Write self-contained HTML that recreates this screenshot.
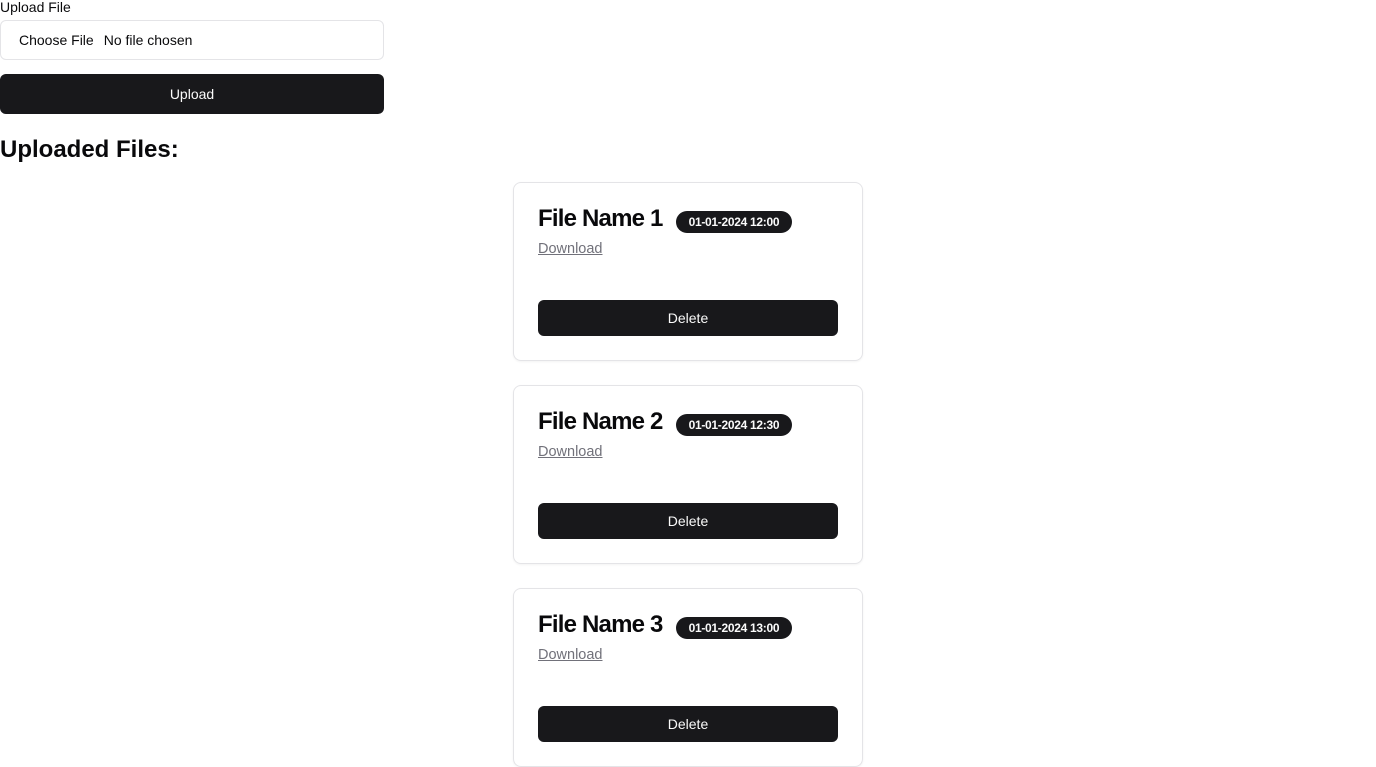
<!DOCTYPE html>
<html><head><style>
*{box-sizing:border-box;margin:0;padding:0}
body{width:1376px;height:767px;overflow:hidden;background:#fff;font-family:"Liberation Sans",Arial,sans-serif;color:#09090b;position:relative}
.lbl{position:absolute;left:0;top:-1px;font-size:14px;line-height:16px}
.inp{position:absolute;left:0;top:20px;width:384px;height:40px;border:1px solid #e4e4e7;border-radius:6px;font-size:14px;line-height:38px;padding-left:18px}
.inp b{font-weight:normal;color:#09090b;margin-right:10px}
.up{position:absolute;left:0;top:74px;width:384px;height:40px;background:#18181b;border-radius:6px;color:#fafafa;font-size:14px;text-align:center;line-height:40px}
h2{position:absolute;left:0;top:135px;font-size:24px;font-weight:bold;line-height:30px}
.card{position:absolute;left:513px;width:350px;height:179px;border:1px solid #e4e4e7;border-radius:8px;box-shadow:0 1px 2px rgba(0,0,0,.05)}
.t{position:absolute;left:24px;top:21px;font-size:24px;font-weight:bold;line-height:30px;letter-spacing:-0.8px}
.badge{display:inline-block;vertical-align:0;margin-left:13px;background:#18181b;color:#fafafa;font-size:12px;font-weight:bold;border-radius:11px;height:22px;line-height:22px;padding:0 13px;letter-spacing:-0.3px}
.dl{position:absolute;left:24px;top:58px;font-size:14.5px;color:#71717a;text-decoration:underline}
.del{position:absolute;left:24px;top:117px;width:300px;height:36px;background:#18181b;border-radius:6px;color:#fafafa;font-size:14px;text-align:center;line-height:36px}
</style></head><body>
<div class="lbl">Upload File</div>
<div class="inp"><b>Choose File</b>No file chosen</div>
<div class="up">Upload</div>
<h2>Uploaded Files:</h2>
<div class="card" style="top:182px"><div class="t">File Name 1<span class="badge">01-01-2024 12:00</span></div><div class="dl">Download</div><div class="del">Delete</div></div>
<div class="card" style="top:385px"><div class="t">File Name 2<span class="badge">01-01-2024 12:30</span></div><div class="dl">Download</div><div class="del">Delete</div></div>
<div class="card" style="top:588px"><div class="t">File Name 3<span class="badge">01-01-2024 13:00</span></div><div class="dl">Download</div><div class="del">Delete</div></div>
</body></html>
